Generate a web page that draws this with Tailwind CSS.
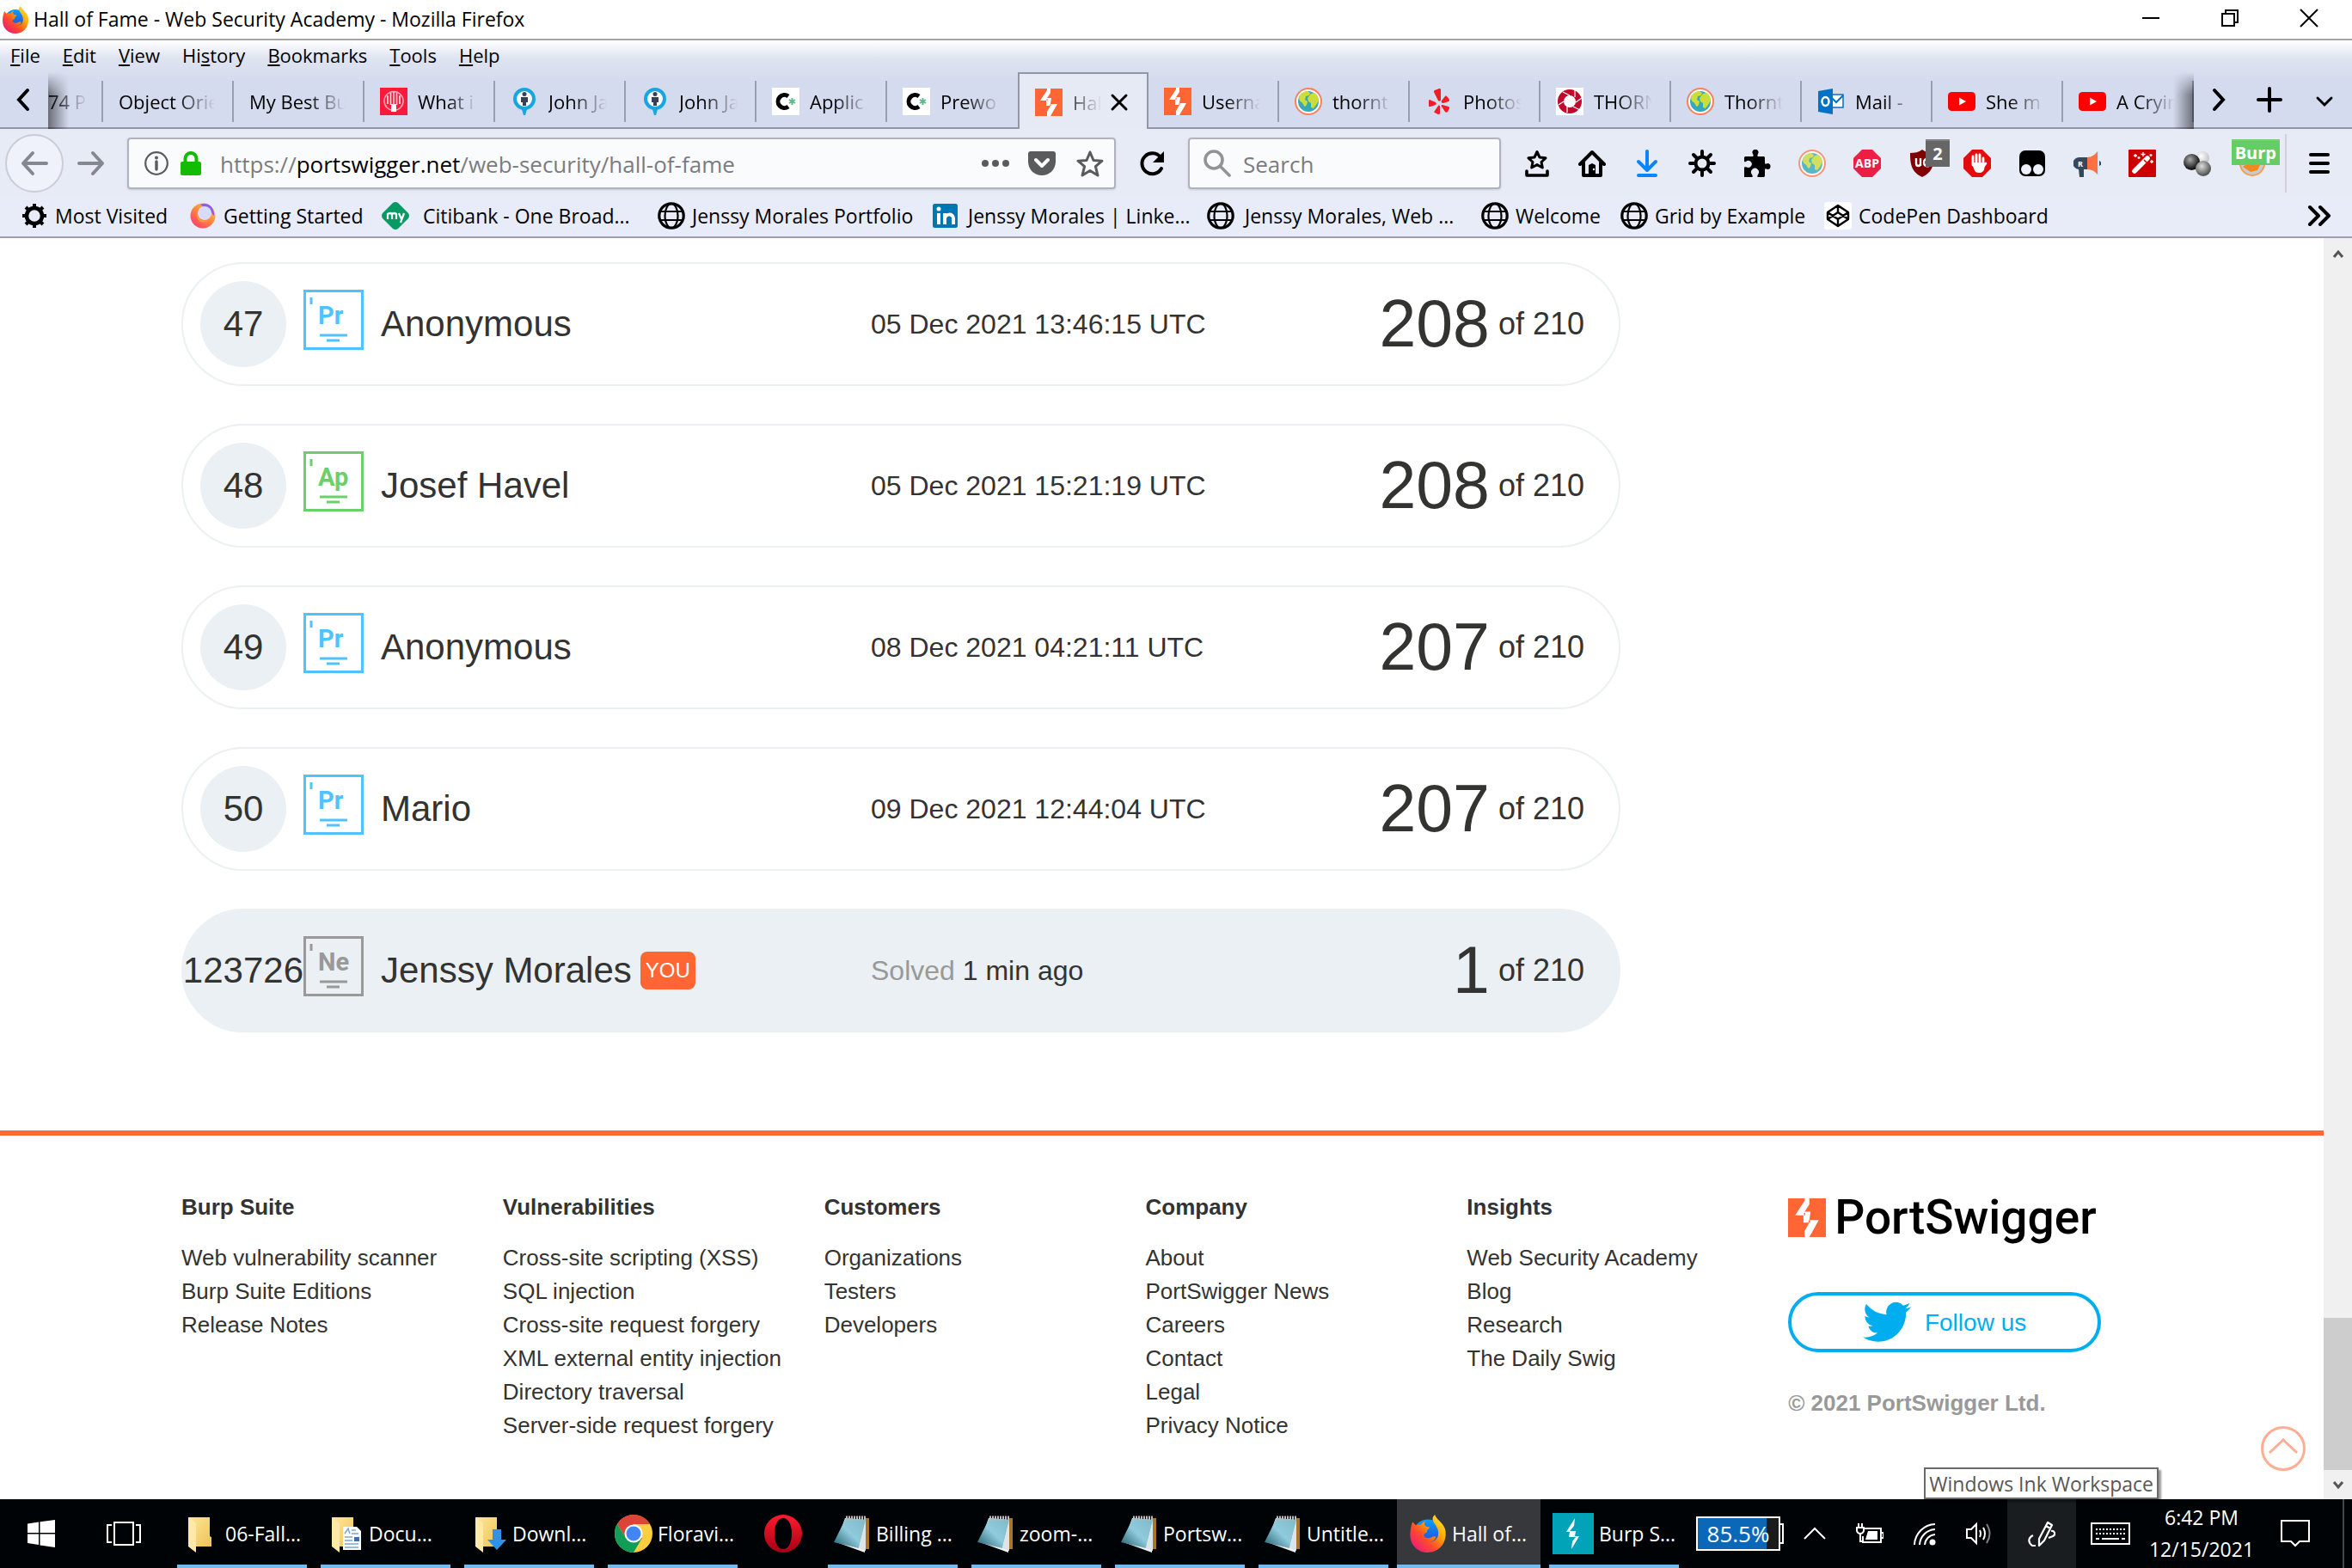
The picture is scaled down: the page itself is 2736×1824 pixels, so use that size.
<!DOCTYPE html>
<html lang="en">
<head>
<meta charset="utf-8">
<title>Hall of Fame - Web Security Academy</title>
<script src="https://cdn.jsdelivr.net/npm/@tailwindcss/browser@4"></script>
</head>
<body class="flex h-screen flex-col overflow-hidden bg-white font-['Open_Sans','Noto_Sans',sans-serif] text-[23px] leading-8 text-black">

<!-- Shared icon sprite -->
<svg class="absolute size-0" aria-hidden="true">
  <defs>
    <linearGradient id="ffBody" x1="1" y1="0" x2="0.1" y2="1"><stop offset="0" stop-color="#fff04a"/><stop offset=".35" stop-color="#ffb000"/><stop offset=".65" stop-color="#ff4a2d"/><stop offset="1" stop-color="#e8108a"/></linearGradient>
    <linearGradient id="ffGlobe" x1="0" y1="0" x2="0" y2="1"><stop offset="0" stop-color="#0a9dff"/><stop offset="1" stop-color="#3035c4"/></linearGradient>
    <linearGradient id="gsG" x1="1" y1="0" x2="0.2" y2="1"><stop offset="0" stop-color="#ffd84d"/><stop offset=".5" stop-color="#ff8a3c"/><stop offset="1" stop-color="#ff3b6b"/></linearGradient>
    <linearGradient id="foldG" x1="0" y1="0" x2="1" y2="1"><stop offset="0" stop-color="#ffe79c"/><stop offset="1" stop-color="#eec254"/></linearGradient>
    <linearGradient id="noteG" x1="0" y1="1" x2="1" y2="0"><stop offset="0" stop-color="#1d5a68"/><stop offset=".5" stop-color="#8fcbdc"/><stop offset="1" stop-color="#7fb9ca"/></linearGradient>
    <linearGradient id="operaG" x1="0" y1="0" x2="0" y2="1"><stop offset="0" stop-color="#ff1b2d"/><stop offset="1" stop-color="#a70014"/></linearGradient>
    <radialGradient id="ballK" cx=".4" cy=".35" r=".6"><stop offset="0" stop-color="#aaa"/><stop offset="1" stop-color="#111"/></radialGradient>
    <radialGradient id="ballG" cx=".4" cy=".35" r=".6"><stop offset="0" stop-color="#ddd"/><stop offset="1" stop-color="#555"/></radialGradient>
    <radialGradient id="ballW" cx=".4" cy=".35" r=".7"><stop offset="0" stop-color="#fff"/><stop offset="1" stop-color="#bbb"/></radialGradient>
  </defs>
  <symbol id="firefox" viewBox="0 0 32 32">
    <circle cx="16" cy="17" r="13" fill="url(#ffGlobe)"/>
    <path d="M3 6c1 1 2 2.500 3 3 1-.6 3-.7 4-.5C11 7 12.500 6 14 5.500c-1.500 1.800-1 3.500.5 4.500 1 .4 2.500.3 2.800.8.2.8-1.300 1.700-2 2.200.2 1.400-.3 1.900-1.300 2.500-1.500.8-2 2-.8 3.300 1.500 1.500 4 1.200 5.800.2 2-1 3.500-.8 3.800.2-1 2.200-3.300 3.600-6 3.800 5 .5 8.700-3.500 8-8.500C24.200 9 20 7 20 3.500 20 2 21 .8 22 0c.8 3 3.500 4.500 5.800 7.500C30 10 31.500 13 31 18c-.8 8-7 14-15 14S1 26 1 17C1 13 2 9 3 6z" fill="url(#ffBody)"/>
  </symbol>
  <symbol id="bolt" viewBox="0 0 32 32">
    <rect width="32" height="32" fill="#ff6633"/>
    <path d="M14 0h4v5l-4 6h5l-1 7h8L18 32h-4v-5l4-7h-5v-6H6L14 2z" fill="#fff"/>
    <path d="M14 12v2M18 18v2" stroke="#ff6633" stroke-width="1"/>
  </symbol>
  <symbol id="earth" viewBox="0 0 32 32">
    <circle cx="16" cy="16" r="15" fill="#fff" stroke="#f98057" stroke-width="2"/>
    <circle cx="16" cy="16" r="12" fill="#36a9b8"/>
    <path d="M6 9c3-4 7-5 9-5l3 2-1 3-4 1-1 4 3 2-1 4-2 2c-2-1-2-4-4-5-2-1-4-4-2-8zM19 7l4-1c3 2 5 6 5 9l-3 5-3 4-3-1v-5l-3-2-1-4z" fill="#cddc39"/>
  </symbol>
  <symbol id="pin" viewBox="0 0 32 32">
    <ellipse cx="16" cy="13" rx="11" ry="11" fill="#fff" stroke="#19a6dc" stroke-width="4"/>
    <path d="M12 22h8l-3 10h-2z" fill="#19a6dc"/><circle cx="16" cy="7.500" r="2.500" fill="#3a3f55"/><path d="M12 11h8v6h-2v4h-4v-4h-2z" fill="#3a3f55"/>
  </symbol>
  <symbol id="cstar" viewBox="0 0 32 32">
    <rect width="32" height="32" fill="#fff"/><path d="M19 10a7.500 7.500 0 1 0 0 12" fill="none" stroke="#000" stroke-width="5"/><path d="M23.500 12v8M20 14l7 4M27 14l-7 4" stroke="#5cb88a" stroke-width="2"/>
  </symbol>
  <symbol id="youtube" viewBox="0 0 32 32"><rect y="5" width="32" height="22" rx="4.500" fill="#f00"/><path d="M13 11.500v9l8-4.500z" fill="#fff"/></symbol>
  <symbol id="net" viewBox="0 0 32 32">
    <g fill="none" stroke="#000"><circle cx="16" cy="16" r="14.200" stroke-width="3.200"/><ellipse cx="16" cy="16" rx="7.500" ry="14" stroke-width="2.200"/><path d="M4 11h24M4 21h24" stroke-width="2.200"/></g>
  </symbol>
  <symbol id="folder" viewBox="0 0 44 44"><path d="M7 3h25v22l2 1v11H12z" fill="url(#foldG)"/><path d="M7 3l9 7v34l-9-7z" fill="#ffe9a8"/></symbol>
  <symbol id="notepad" viewBox="0 0 44 44">
    <path d="M38 4h4v36h-5z" fill="#a8752a"/><path d="M14 4l24 2-1 38-33-12z" fill="#eef3f5"/><path d="M15 4l23 2-8 33L1 32z" fill="url(#noteG)"/><path d="M38 8v34l-8-3z" fill="#dde4e8"/><path d="M15 4h24" stroke="#bbb" stroke-width="5" stroke-dasharray="2 1"/>
  </symbol>
</svg>

<header>
  <!-- Title bar -->
  <div class="flex h-[47px] items-center border-b-2 border-[#a6a6a6] bg-white">
    <svg class="ml-0.5 size-8"><use href="#firefox"/></svg>
    <h1 class="ml-[5px] flex-1 pb-0.5">Hall of Fame - Web Security Academy - Mozilla Firefox</h1>
    <div class="mr-1 flex pb-1">
      <button aria-label="Minimize" class="flex w-[92px] justify-center"><svg class="size-6" viewBox="0 0 24 24"><path d="M2 12h20" stroke="#000" stroke-width="2"/></svg></button>
      <button aria-label="Restore" class="flex w-[92px] justify-center"><svg class="size-6" viewBox="0 0 24 24" fill="none" stroke="#000" stroke-width="2"><path d="M3 7h14v14H3zM7 7V3h14v14h-4"/></svg></button>
      <button aria-label="Close" class="flex w-[92px] justify-center"><svg class="size-6" viewBox="0 0 24 24"><path d="M2 2l20 20M22 2L2 22" stroke="#000" stroke-width="2"/></svg></button>
    </div>
  </div>

  <!-- Menu and tab strip share one gradient -->
  <div class="bg-linear-to-b from-white via-[#dfe4f1] via-20% to-[#d5dbee] to-45% text-[22px]">
    <nav aria-label="Menu" class="flex h-[37px] items-center gap-[26px] pb-1 pl-3">
      <button><u>F</u>ile</button><button><u>E</u>dit</button><button><u>V</u>iew</button><button>Hi<u>s</u>tory</button><button><u>B</u>ookmarks</button><button><u>T</u>ools</button><button><u>H</u>elp</button>
    </nav>
    <div class="flex h-[66px]">
      <button aria-label="Scroll tabs left" class="flex w-14 items-center justify-center border-b-2 border-[#9297a8]"><svg class="size-8" viewBox="0 0 32 32"><path d="M20 5L10 16l10 11" fill="none" stroke="#000" stroke-width="4" stroke-linecap="round"/></svg></button>
      <div class="relative flex flex-1 overflow-hidden">
        <div class="pointer-events-none absolute inset-y-0 left-0 z-10 w-6 bg-linear-to-r from-black/50 to-transparent [mask-image:linear-gradient(transparent,black_40%)]"></div>
        <div class="pointer-events-none absolute inset-y-0 right-0 z-10 w-6 bg-linear-to-l from-black/50 to-transparent [mask-image:linear-gradient(transparent,black_40%)]"></div>
        <a href="#" class="flex w-16 shrink-0 items-center border-b-2 border-[#9297a8] pt-1"><span class="flex-1 whitespace-nowrap [mask-image:linear-gradient(to_right,black,transparent_75%)]">74 P</span><i class="h-12 w-0.5 bg-[#9a9fae]"></i></a>
        <a href="#" class="flex w-[152px] shrink-0 items-center border-b-2 border-[#9297a8] pt-1 pl-[18px]"><span class="mr-5 flex-1 overflow-hidden whitespace-nowrap [mask-image:linear-gradient(to_right,black_60%,transparent)]">Object Orie</span><i class="h-12 w-0.5 bg-[#9a9fae]"></i></a>
        <a href="#" class="flex w-[152px] shrink-0 items-center border-b-2 border-[#9297a8] pt-1 pl-[18px]"><span class="mr-5 flex-1 overflow-hidden whitespace-nowrap [mask-image:linear-gradient(to_right,black_60%,transparent)]">My Best Bu</span><i class="h-12 w-0.5 bg-[#9a9fae]"></i></a>
        <a href="#" class="flex w-[152px] shrink-0 items-center border-b-2 border-[#9297a8] pt-1 pl-[18px]"><svg class="mr-3 size-8" viewBox="0 0 32 32"><rect width="32" height="32" fill="#fb1a3c"/><g stroke="#fff" fill="none" stroke-width="1.600"><path d="M16 5v22M12.500 6v14M19.500 6v14M9 9v10M23 9v10" stroke-opacity=".85"/><circle cx="16" cy="15.500" r="11" stroke-opacity=".6"/></g><path d="M13 19h6v9h-6z" fill="#fff"/></svg><span class="mr-5 flex-1 overflow-hidden whitespace-nowrap [mask-image:linear-gradient(to_right,black_50%,transparent)]">What i</span><i class="h-12 w-0.5 bg-[#9a9fae]"></i></a>
        <a href="#" class="flex w-[152px] shrink-0 items-center border-b-2 border-[#9297a8] pt-1 pl-[18px]"><svg class="mr-3 size-8"><use href="#pin"/></svg><span class="mr-5 flex-1 overflow-hidden whitespace-nowrap [mask-image:linear-gradient(to_right,black_40%,transparent)]">John Ja</span><i class="h-12 w-0.5 bg-[#9a9fae]"></i></a>
        <a href="#" class="flex w-[152px] shrink-0 items-center border-b-2 border-[#9297a8] pt-1 pl-[18px]"><svg class="mr-3 size-8"><use href="#pin"/></svg><span class="mr-5 flex-1 overflow-hidden whitespace-nowrap [mask-image:linear-gradient(to_right,black_40%,transparent)]">John Ja</span><i class="h-12 w-0.5 bg-[#9a9fae]"></i></a>
        <a href="#" class="flex w-[152px] shrink-0 items-center border-b-2 border-[#9297a8] pt-1 pl-[18px]"><svg class="mr-3 size-8"><use href="#cstar"/></svg><span class="mr-5 flex-1 overflow-hidden whitespace-nowrap [mask-image:linear-gradient(to_right,black_40%,transparent)]">Applic</span><i class="h-12 w-0.5 bg-[#9a9fae]"></i></a>
        <a href="#" class="flex w-[152px] shrink-0 items-center border-b-2 border-[#9297a8] pt-1 pl-[18px]"><svg class="mr-3 size-8"><use href="#cstar"/></svg><span class="mr-5 flex-1 overflow-hidden whitespace-nowrap [mask-image:linear-gradient(to_right,black_40%,transparent)]">Prewo</span></a>
        <a href="#" aria-current="page" class="flex w-[152px] shrink-0 items-center border-x-2 border-t-2 border-[#9297a8] bg-[#e6eaf5] pt-0.5 pl-[18px]"><svg class="mr-3 size-8"><use href="#bolt"/></svg><span class="w-[34px] whitespace-nowrap opacity-70 [mask-image:linear-gradient(to_right,black,transparent)]">Hal</span><svg class="ml-2 size-6" viewBox="0 0 24 24"><path d="M4 4l16 16M20 4L4 20" stroke="#000" stroke-width="3" stroke-linecap="round"/></svg></a>
        <a href="#" class="flex w-[152px] shrink-0 items-center border-b-2 border-[#9297a8] pt-1 pl-[18px]"><svg class="mr-3 size-8"><use href="#bolt"/></svg><span class="mr-5 flex-1 overflow-hidden whitespace-nowrap [mask-image:linear-gradient(to_right,black_40%,transparent)]">Userna</span><i class="h-12 w-0.5 bg-[#9a9fae]"></i></a>
        <a href="#" class="flex w-[152px] shrink-0 items-center border-b-2 border-[#9297a8] pt-1 pl-[18px]"><svg class="mr-3 size-8"><use href="#earth"/></svg><span class="mr-5 flex-1 overflow-hidden whitespace-nowrap [mask-image:linear-gradient(to_right,black_40%,transparent)]">thornt</span><i class="h-12 w-0.5 bg-[#9a9fae]"></i></a>
        <a href="#" class="flex w-[152px] shrink-0 items-center border-b-2 border-[#9297a8] pt-1 pl-[18px]"><svg class="mr-3 size-8" viewBox="0 0 32 32" fill="#f21d24"><path d="M11 3l5-2c1 0 2 0 2 1v12c0 2-2 2-3 1L10 5c0-1 0-2 1-2zM5 14l7 3c1 1 1 2 0 3l-6 2c-2 0-2 0-2-2v-4c0-1 0-2 1-2zM19 15l4-5c1-1 2 0 3 1l2 3c0 1 0 2-1 2l-6 2c-2 0-3-1-2-3zM20 20l7 2c1 0 1 1 1 2l-2 4c-1 1-2 1-3 0l-4-6c-1-2 0-2 1-2zM15 21c1-1 2 0 2 1v7c0 2-1 2-2 2l-4-2c-1 0-1-1 0-2z"/></svg><span class="mr-5 flex-1 overflow-hidden whitespace-nowrap [mask-image:linear-gradient(to_right,black_40%,transparent)]">Photos</span><i class="h-12 w-0.5 bg-[#9a9fae]"></i></a>
        <a href="#" class="flex w-[152px] shrink-0 items-center border-b-2 border-[#9297a8] pt-1 pl-[18px]"><svg class="mr-3 size-8" viewBox="0 0 32 32"><rect width="32" height="32" fill="#fff"/><circle cx="16" cy="16" r="10.500" fill="none" stroke="#c0092c" stroke-width="7"/><path d="M16 9l-8-4M22 11V3M23 17l7-5M20 22l8 4M13 22v7M9 16l-6 4" stroke="#fff" stroke-width="1.200"/></svg><span class="mr-5 flex-1 overflow-hidden whitespace-nowrap [mask-image:linear-gradient(to_right,black_40%,transparent)]">THORN</span><i class="h-12 w-0.5 bg-[#9a9fae]"></i></a>
        <a href="#" class="flex w-[152px] shrink-0 items-center border-b-2 border-[#9297a8] pt-1 pl-[18px]"><svg class="mr-3 size-8"><use href="#earth"/></svg><span class="mr-5 flex-1 overflow-hidden whitespace-nowrap [mask-image:linear-gradient(to_right,black_40%,transparent)]">Thornt</span><i class="h-12 w-0.5 bg-[#9a9fae]"></i></a>
        <a href="#" class="flex w-[152px] shrink-0 items-center border-b-2 border-[#9297a8] pt-1 pl-[18px]"><svg class="mr-3 size-8" viewBox="0 0 32 32"><path d="M17 8h13v15H17z" fill="#fff" stroke="#0072c6" stroke-width="1.500"/><path d="M17 12l5 5 8-8" fill="none" stroke="#0072c6" stroke-width="2"/><path d="M1 4l17-3v30L1 28z" fill="#0072c6"/><ellipse cx="9.500" cy="16" rx="4" ry="5" fill="none" stroke="#fff" stroke-width="2.500"/></svg><span class="mr-5 flex-1 overflow-hidden whitespace-nowrap [mask-image:linear-gradient(to_right,black_50%,transparent)]">Mail -</span><i class="h-12 w-0.5 bg-[#9a9fae]"></i></a>
        <a href="#" class="flex w-[152px] shrink-0 items-center border-b-2 border-[#9297a8] pt-1 pl-[18px]"><svg class="mr-3 size-8"><use href="#youtube"/></svg><span class="mr-5 flex-1 overflow-hidden whitespace-nowrap [mask-image:linear-gradient(to_right,black_40%,transparent)]">She m</span><i class="h-12 w-0.5 bg-[#9a9fae]"></i></a>
        <a href="#" class="flex w-[152px] shrink-0 items-center border-b-2 border-[#9297a8] pt-1 pl-[18px]"><svg class="mr-3 size-8"><use href="#youtube"/></svg><span class="mr-5 flex-1 overflow-hidden whitespace-nowrap [mask-image:linear-gradient(to_right,black_40%,transparent)]">A Cryin</span><i class="h-12 w-0.5 bg-[#9a9fae]"></i></a>
      </div>
      <div class="flex w-[184px] border-b-2 border-[#9297a8]">
        <button aria-label="Scroll tabs right" class="flex w-14 items-center justify-center"><svg class="size-8" viewBox="0 0 32 32"><path d="M12 5l10 11-10 11" fill="none" stroke="#000" stroke-width="4" stroke-linecap="round"/></svg></button>
        <button aria-label="New tab" class="flex w-16 items-center justify-center"><svg class="size-8" viewBox="0 0 32 32"><path d="M16 3v26M3 16h26" stroke="#000" stroke-width="4" stroke-linecap="round"/></svg></button>
        <button aria-label="List all tabs" class="flex w-16 items-center justify-center pt-1"><svg class="size-8" viewBox="0 0 32 32"><path d="M8 12l8 8 8-8" fill="none" stroke="#000" stroke-width="3" stroke-linecap="round"/></svg></button>
      </div>
    </div>
  </div>

  <!-- Navigation toolbar -->
  <div class="flex h-20 items-center bg-[#e7ebf6]">
    <button aria-label="Back" class="ml-1.5 flex size-[68px] items-center justify-center rounded-full border-2 border-[#c9cdd8] bg-[#eff2fa]"><svg class="size-8" viewBox="0 0 32 32" fill="none" stroke="#86888f" stroke-width="4" stroke-linecap="round" stroke-linejoin="round"><path d="M30 16H3M14 4L3 16l11 12"/></svg></button>
    <button aria-label="Forward" class="ml-4"><svg class="size-8" viewBox="0 0 32 32" fill="none" stroke="#86888f" stroke-width="4" stroke-linecap="round" stroke-linejoin="round"><path d="M2 16h27M18 4l11 12-11 12"/></svg></button>
    <div class="ml-[26px] flex h-[60px] flex-1 items-center rounded-sm border-2 border-[#b0b3bd] bg-[#fafbfd] pr-3 pl-[18px] shadow-sm">
      <svg class="size-7" viewBox="0 0 28 28"><circle cx="14" cy="14" r="12.800" fill="none" stroke="#5b5b5b" stroke-width="2.200"/><path d="M14 12v9" stroke="#5b5b5b" stroke-width="3.400" stroke-linecap="round"/><circle cx="14" cy="7.500" r="2" fill="#5b5b5b"/></svg>
      <svg class="ml-3 size-7" viewBox="0 0 28 28"><path d="M7.500 14V8.500a6.500 6.500 0 0 1 13 0V14" fill="none" stroke="#12bc00" stroke-width="4"/><rect x="2" y="12" width="24" height="16" rx="2" fill="#12bc00"/></svg>
      <p class="ml-5 flex-1 pt-0.5 text-[26px] text-[#7c7c7e]">https://<span class="text-black">portswigger.net</span>/web-security/hall-of-fame</p>
      <button aria-label="Page actions"><svg class="h-8 w-9" viewBox="0 0 36 32" fill="#5b5b5d"><circle cx="6" cy="16" r="4"/><circle cx="18" cy="16" r="4"/><circle cx="30" cy="16" r="4"/></svg></button>
      <button aria-label="Save to Pocket" class="ml-5"><svg class="size-8" viewBox="0 0 32 32"><path d="M3 2h26c2 0 3 1 3 3v9c0 9-7 16-16 16S0 23 0 14V5c0-2 1-3 3-3z" fill="#5b5b5d"/><path d="M9 12l7 7 7-7" fill="none" stroke="#fff" stroke-width="4" stroke-linecap="round" stroke-linejoin="round"/></svg></button>
      <button aria-label="Bookmark page" class="ml-6"><svg class="size-8" viewBox="0 0 32 32"><path d="M16 3l4 9.500 10 .7-7.600 6.500L25 30l-9-5.500L7 30l2.600-10.300L2 13.200l10-.7z" fill="none" stroke="#5b5b5d" stroke-width="3" stroke-linejoin="round"/></svg></button>
    </div>
    <button aria-label="Reload" class="flex w-[84px] justify-center"><svg class="size-8" viewBox="0 0 32 32"><path d="M27 22a12 12 0 1 1-1-13" fill="none" stroke="#000" stroke-width="4" stroke-linecap="round"/><path d="M30 2v13H17z" fill="#000"/></svg></button>
    <label class="flex h-[60px] w-[364px] items-center rounded-sm border-2 border-[#b0b3bd] bg-[#fafbfd] pl-4 shadow-sm">
      <svg class="size-8 shrink-0" viewBox="0 0 32 32" fill="none" stroke="#939395" stroke-width="3.600" stroke-linecap="round"><circle cx="12" cy="12" r="10"/><path d="M20 20l10 10"/></svg>
      <input type="search" aria-label="Search" placeholder="Search" class="ml-[14px] w-full bg-transparent pt-0.5 text-[26px] outline-none placeholder:text-[#7c7c7e]">
    </label>
    <div class="ml-2.5 flex">
      <button aria-label="Library" class="flex w-16 justify-center"><svg class="size-8" viewBox="0 0 32 32" fill="none" stroke="#000" stroke-linejoin="round" stroke-linecap="round"><path d="M16 2.500l3 6.500 7 .8-5 4.700 1.300 6.500-6.300-3.400L9.700 21l1.300-6.500-5-4.700 7-.8z" stroke-width="3"/><path d="M4 25v5h24v-5" stroke-width="3.600"/></svg></button>
      <button aria-label="Home" class="flex w-16 justify-center"><svg class="size-8" viewBox="0 0 32 32"><path d="M2 17L16 3l14 14M6 15v15h20V15" fill="none" stroke="#000" stroke-width="4" stroke-linecap="round" stroke-linejoin="round"/><path d="M12 30V18l4-2 4 2v12z" fill="#000"/><circle cx="18" cy="23" r="1.200" fill="#fff"/></svg></button>
      <button aria-label="Downloads" class="flex w-16 justify-center"><svg class="size-8" viewBox="0 0 32 32" fill="none" stroke="#0a84ff" stroke-width="4" stroke-linecap="round" stroke-linejoin="round"><path d="M16 2v22M6 14l10 10 10-10M6 30h20"/></svg></button>
      <button aria-label="Settings" class="flex w-16 justify-center"><svg class="size-8" viewBox="0 0 32 32" fill="none" stroke="#000" stroke-width="4" stroke-linecap="round"><circle cx="16" cy="16" r="7.500"/><path d="M16 2v5M16 25v5M2 16h5M25 16h5M6 6l4 4M22 22l4 4M26 6l-4 4M10 22l-4 4"/></svg></button>
      <button aria-label="Add-ons" class="flex w-16 justify-center"><svg class="size-8" viewBox="0 0 32 32"><path d="M10 8c2 0 2-1 1-3a3.500 3.500 0 1 1 6 0c-1 2-1 3 1 3h5c1.500 0 2 .5 2 2v5c0 2 1 2 3 1a3.500 3.500 0 1 1 0 7c-2-1-3-1-3 1v6c0 1.500-.5 2-2 2h-6c-1 0-1-1 0-3a4.500 4.500 0 1 0-7 0c1 2 1 3 0 3H1V21c0-1 1-1 3-.5a4 4 0 1 0-1-6.500c-1 .6-2 .5-2-1v-3c0-1.500.5-2 2-2z" fill="#000"/></svg></button>
      <button aria-label="Proxy" class="flex w-16 justify-center"><svg class="size-8 opacity-80"><use href="#earth"/></svg></button>
      <button aria-label="Adblock Plus" class="flex w-16 justify-center"><svg class="size-8" viewBox="0 0 32 32"><path d="M10 0h12l10 10v12L22 32H10L0 22V10z" fill="#ed1e45"/><text x="16" y="21" text-anchor="middle" font-size="14" font-weight="700" fill="#fff" font-family="Open Sans">ABP</text></svg></button>
      <button aria-label="uBlock" class="relative flex w-16 justify-center"><svg class="size-8" viewBox="0 0 32 32"><path d="M16 0c4 3 9 4 14 4 0 14-2 22-14 28C4 26 2 18 2 4c5 0 10-1 14-4z" fill="#800000"/><path d="M9 10v6c0 4 5 4 5 0v-6m0 6v3M24 11c-4-1-6 1-6 4s2 5 6 4" fill="none" stroke="#fff" stroke-width="2.400"/></svg><span class="absolute -top-3 right-0 flex h-8 w-7 items-center justify-center border-t-2 border-[#808080] bg-[#666] text-xl font-bold text-white">2</span></button>
      <button aria-label="Blocker" class="flex w-16 justify-center"><svg class="size-8" viewBox="0 0 32 32"><path d="M10 0h12l10 10v12L22 32H10L0 22V10z" fill="#e40d0d"/><path d="M11 8v10M15 6v12M19 6v12M23 10v10l3-4" stroke="#fff" stroke-width="2.800" stroke-linecap="round" fill="none"/><path d="M9.600 15h14.800v6c0 4-3 6-6 6s-5-1-6-4z" fill="#fff"/></svg></button>
      <button aria-label="Tampermonkey" class="flex w-16 justify-center"><svg class="size-8" viewBox="0 0 32 32"><rect x="1" y="1" width="30" height="30" rx="7" fill="#000"/><circle cx="9" cy="23" r="6" fill="#eef1fa"/><circle cx="23" cy="23" r="6" fill="#eef1fa"/></svg></button>
      <button aria-label="Announcements" class="flex w-16 justify-center"><svg class="size-8" viewBox="0 0 32 32"><path d="M7 9h9v14h-4v9H7l-1-9a7 7 0 0 1 1-14z" fill="#34495e"/><path d="M16 9c5 0 9-3 12-7v27c-3-4-7-6-12-6z" fill="#ff7043"/><path d="M29 2v28" stroke="#cfe8f5" stroke-width="2"/><path d="M30 13c3 1 3 5 0 6z" fill="#34495e"/><text x="8" y="20" text-anchor="middle" font-size="9" font-weight="700" fill="#fff" font-family="Open Sans">R</text></svg></button>
      <button aria-label="Magic wand" class="flex w-16 justify-center"><svg class="size-8" viewBox="0 0 32 32"><rect width="32" height="32" rx="1" fill="#c00"/><path d="M7 25L22 10" stroke="#fff" stroke-width="5.500" stroke-linecap="round"/><path d="M18 12l3 3" stroke="#c00" stroke-width="1.500"/><path d="M17 3v5M14.500 5.500h5M8 5v4M6 7h4M27 12v4M25 14h4M12 8v3M10.500 9.500h3M26 5v3M24.500 6.500h3" stroke="#fff" stroke-width="1.300"/></svg></button>
      <button aria-label="Spheres" class="flex w-16 justify-center"><svg class="size-8" viewBox="0 0 32 32"><circle cx="22" cy="10" r="8" fill="url(#ballW)"/><circle cx="9.500" cy="14.500" r="9.500" fill="url(#ballK)"/><circle cx="23" cy="22" r="9" fill="url(#ballG)"/></svg></button>
      <button aria-label="Burp proxy" class="relative flex w-16 justify-center"><svg class="size-8" viewBox="0 0 32 32"><circle cx="16" cy="16" r="14" fill="#c8cbd2" stroke="#f0a050" stroke-width="2"/><path d="M5 20l8-6h14l-5 10-8 2z" fill="#ef8a1d"/></svg><span class="absolute -top-3 right-0 flex h-[30px] items-center border-t-2 border-[#78cc78] bg-[#66cc66] px-1 text-xl font-bold text-white">Burp</span></button>
    </div>
    <i class="ml-1.5 h-[68px] w-0.5 bg-[#cfd2dd]"></i>
    <button aria-label="Open menu" class="flex w-[76px] justify-center"><svg class="size-8" viewBox="0 0 32 32"><path d="M6 6h20M6 16h20M6 26h20" stroke="#000" stroke-width="4" stroke-linecap="round"/></svg></button>
  </div>

  <!-- Bookmarks toolbar -->
  <nav aria-label="Bookmarks" class="flex h-[47px] items-center border-b-2 border-[#9b9fb0] bg-[#e8ecf8] pb-1 pl-6 whitespace-nowrap">
    <a href="#" class="flex w-[196px] items-center gap-2"><svg class="size-8" viewBox="0 0 32 32" fill="none" stroke="#000"><circle cx="16" cy="16" r="9" stroke-width="4.500"/><path d="M16 2v5M16 25v5M2 16h5M25 16h5M6 6l4 4M22 22l4 4M26 6l-4 4M10 22l-4 4" stroke-width="4"/></svg>Most Visited</a>
    <a href="#" class="flex w-[224px] items-center gap-2"><svg class="size-8" viewBox="0 0 32 32"><circle cx="16" cy="16" r="14.500" fill="url(#gsG)"/><path d="M13 3c8-4 17 3 16 13-1-1-2-2-3-4" fill="#9059ff"/><circle cx="18" cy="13" r="8" fill="#d9dcf8"/><path d="M9 12c1 8 7 11 14 9-5 5-16 3-14-9z" fill="#ff9a3c"/></svg>Getting Started</a>
    <a href="#" class="flex w-[321px] items-center gap-4"><svg class="size-8" viewBox="0 0 32 32"><path d="M13 1q3-2 6 0l12 12q2 3 0 6L19 31q-3 2-6 0L1 19q-2-3 0-6z" fill="#079a63"/><path d="M7 20v-6q3-2 5 0v6m0-6q3-2 5 0v6M20 13l3 7m3-7l-4 11" fill="none" stroke="#fff" stroke-width="2.200"/></svg>Citibank - One Broad...</a>
    <a href="#" class="flex w-[319px] items-center gap-2"><svg class="size-8"><use href="#net"/></svg>Jenssy Morales Portfolio</a>
    <a href="#" class="flex w-[320px] items-center gap-2.5"><svg class="size-8" viewBox="0 0 32 32"><rect x="1" y="2" width="29" height="28" rx="2.500" fill="#0077b5"/><path d="M8 13v13M15 26V13m0 7c0-7 10-7 10-1v7" fill="none" stroke="#fff" stroke-width="4"/><circle cx="8" cy="8" r="2.500" fill="#fff"/></svg>Jenssy Morales | Linke...</a>
    <a href="#" class="flex w-[319px] items-center gap-3"><svg class="size-8"><use href="#net"/></svg>Jenssy Morales, Web ...</a>
    <a href="#" class="flex w-[162px] items-center gap-2"><svg class="size-8"><use href="#net"/></svg>Welcome</a>
    <a href="#" class="flex w-[237px] items-center gap-2"><svg class="size-8"><use href="#net"/></svg>Grid by Example</a>
    <a href="#" class="flex flex-1 items-center gap-2"><svg class="size-8" viewBox="0 0 32 32"><rect width="32" height="32" rx="3" fill="#fff"/><g fill="none" stroke="#000" stroke-width="2.400" stroke-linejoin="round"><path d="M16 4l12 8v8l-12 8-12-8v-8zM16 4v8M16 20v8M4 12l12 8 12-8M4 20l12-8 12 8"/></g></svg>CodePen Dashboard</a>
    <button aria-label="More bookmarks" class="mr-[22px]"><svg class="size-8" viewBox="0 0 32 32" fill="none" stroke="#000" stroke-width="4" stroke-linecap="round" stroke-linejoin="round"><path d="M5 6l10 10L5 26M17 6l10 10-10 10"/></svg></button>
  </nav>
</header>

<!-- Web page viewport -->
<div class="flex min-h-0 flex-1 font-['Liberation_Sans',Arial,sans-serif] text-[#333332]">
  <div class="relative flex min-w-0 flex-1 flex-col overflow-hidden">
    <main class="px-[211px] pt-7 pb-[114px]">
      <ol class="flex max-w-[1674px] flex-col gap-11 text-[42px]">
        <li class="grid h-36 grid-cols-[140px_90px_570px_1fr] items-center rounded-full border-2 border-[#eaf0f3] pr-10">
          <span class="flex size-[100px] items-center justify-center justify-self-center rounded-full bg-[#eaf0f3]">47</span>
          <svg class="mb-2.5 size-[70px] text-[#4fc3ff]" viewBox="0 0 70 70"><rect x="1.500" y="1.500" width="67" height="67" fill="none" stroke="currentColor" stroke-width="3"/><path d="M9 9v8M19 53h32M27 59h15" stroke="currentColor" stroke-width="3"/><text x="17" y="40" font-size="29" font-weight="700" fill="currentColor" font-family="Liberation Sans Narrow, Roboto">Pr</text></svg>
          <span>Anonymous</span>
          <span class="col-start-4 row-start-1 flex items-center justify-between"><time class="text-[32px]">05 Dec 2021 13:46:15 UTC</time><span class="flex items-center gap-2.5 text-4xl"><span class="text-[77px]">208</span>of 210</span></span>
        </li>
        <li class="grid h-36 grid-cols-[140px_90px_570px_1fr] items-center rounded-full border-2 border-[#eaf0f3] pr-10">
          <span class="flex size-[100px] items-center justify-center justify-self-center rounded-full bg-[#eaf0f3]">48</span>
          <svg class="mb-2.5 size-[70px] text-[#6bcf6b]" viewBox="0 0 70 70"><rect x="1.500" y="1.500" width="67" height="67" fill="none" stroke="currentColor" stroke-width="3"/><path d="M9 9v8M19 53h32M27 59h15" stroke="currentColor" stroke-width="3"/><text x="17" y="40" font-size="29" font-weight="700" fill="currentColor" font-family="Liberation Sans Narrow, Roboto">Ap</text></svg>
          <span>Josef Havel</span>
          <span class="col-start-4 row-start-1 flex items-center justify-between"><time class="text-[32px]">05 Dec 2021 15:21:19 UTC</time><span class="flex items-center gap-2.5 text-4xl"><span class="text-[77px]">208</span>of 210</span></span>
        </li>
        <li class="grid h-36 grid-cols-[140px_90px_570px_1fr] items-center rounded-full border-2 border-[#eaf0f3] pr-10">
          <span class="flex size-[100px] items-center justify-center justify-self-center rounded-full bg-[#eaf0f3]">49</span>
          <svg class="mb-2.5 size-[70px] text-[#4fc3ff]" viewBox="0 0 70 70"><rect x="1.500" y="1.500" width="67" height="67" fill="none" stroke="currentColor" stroke-width="3"/><path d="M9 9v8M19 53h32M27 59h15" stroke="currentColor" stroke-width="3"/><text x="17" y="40" font-size="29" font-weight="700" fill="currentColor" font-family="Liberation Sans Narrow, Roboto">Pr</text></svg>
          <span>Anonymous</span>
          <span class="col-start-4 row-start-1 flex items-center justify-between"><time class="text-[32px]">08 Dec 2021 04:21:11 UTC</time><span class="flex items-center gap-2.5 text-4xl"><span class="text-[77px]">207</span>of 210</span></span>
        </li>
        <li class="grid h-36 grid-cols-[140px_90px_570px_1fr] items-center rounded-full border-2 border-[#eaf0f3] pr-10">
          <span class="flex size-[100px] items-center justify-center justify-self-center rounded-full bg-[#eaf0f3]">50</span>
          <svg class="mb-2.5 size-[70px] text-[#4fc3ff]" viewBox="0 0 70 70"><rect x="1.500" y="1.500" width="67" height="67" fill="none" stroke="currentColor" stroke-width="3"/><path d="M9 9v8M19 53h32M27 59h15" stroke="currentColor" stroke-width="3"/><text x="17" y="40" font-size="29" font-weight="700" fill="currentColor" font-family="Liberation Sans Narrow, Roboto">Pr</text></svg>
          <span>Mario</span>
          <span class="col-start-4 row-start-1 flex items-center justify-between"><time class="text-[32px]">09 Dec 2021 12:44:04 UTC</time><span class="flex items-center gap-2.5 text-4xl"><span class="text-[77px]">207</span>of 210</span></span>
        </li>
        <li class="grid h-36 grid-cols-[140px_90px_570px_1fr] items-center rounded-full border-2 border-[#eaf0f3] bg-[#eaf0f3] pr-10">
          <span class="justify-self-end">123726</span>
          <svg class="mb-2.5 size-[70px] text-[#999998]" viewBox="0 0 70 70"><rect x="1.500" y="1.500" width="67" height="67" fill="none" stroke="currentColor" stroke-width="3"/><path d="M9 9v8M19 53h32M27 59h15" stroke="currentColor" stroke-width="3"/><text x="17" y="40" font-size="29" font-weight="700" fill="currentColor" font-family="Liberation Sans Narrow, Roboto">Ne</text></svg>
          <span class="flex items-center gap-2.5">Jenssy Morales <span class="flex h-11 items-center rounded-lg bg-[#ff6633] px-1.5 text-2xl text-white">YOU</span></span>
          <span class="col-start-4 row-start-1 flex items-center justify-between"><span class="text-[32px]"><span class="text-[#999998]">Solved</span> 1 min ago</span><span class="flex items-center gap-2.5 text-4xl"><span class="text-[77px]">1</span>of 210</span></span>
        </li>
      </ol>
    </main>

    <footer class="grid grid-cols-6 gap-2.5 border-t-6 border-[#ff6633] pt-16 pr-[259px] pl-[211px] text-[26px] leading-[39px] whitespace-nowrap">
      <section><h2 class="mb-5 font-bold">Burp Suite</h2><ul><li><a href="#">Web vulnerability scanner</a></li><li><a href="#">Burp Suite Editions</a></li><li><a href="#">Release Notes</a></li></ul></section>
      <section><h2 class="mb-5 font-bold">Vulnerabilities</h2><ul><li><a href="#">Cross-site scripting (XSS)</a></li><li><a href="#">SQL injection</a></li><li><a href="#">Cross-site request forgery</a></li><li><a href="#">XML external entity injection</a></li><li><a href="#">Directory traversal</a></li><li><a href="#">Server-side request forgery</a></li></ul></section>
      <section><h2 class="mb-5 font-bold">Customers</h2><ul><li><a href="#">Organizations</a></li><li><a href="#">Testers</a></li><li><a href="#">Developers</a></li></ul></section>
      <section><h2 class="mb-5 font-bold">Company</h2><ul><li><a href="#">About</a></li><li><a href="#">PortSwigger News</a></li><li><a href="#">Careers</a></li><li><a href="#">Contact</a></li><li><a href="#">Legal</a></li><li><a href="#">Privacy Notice</a></li></ul></section>
      <section><h2 class="mb-5 font-bold">Insights</h2><ul><li><a href="#">Web Security Academy</a></li><li><a href="#">Blog</a></li><li><a href="#">Research</a></li><li><a href="#">The Daily Swig</a></li></ul></section>
      <section>
        <a href="#" class="mt-1 flex h-[54px] items-center gap-2.5 font-['Roboto',sans-serif] text-[55px] font-medium text-black"><svg class="h-[45px] w-11" viewBox="0 0 32 32" preserveAspectRatio="none"><use href="#bolt"/></svg>PortSwigger</a>
        <a href="#" class="mt-15 flex h-[70px] items-center justify-center gap-4 rounded-full border-4 border-[#00aeef] text-[28px] text-[#00aeef]"><svg class="h-12 w-14" viewBox="0 0 24 20" fill="currentColor"><path d="M24 2.400a9.800 9.800 0 0 1-2.800.8A4.900 4.900 0 0 0 23.300.5a9.900 9.900 0 0 1-3.100 1.200 4.900 4.900 0 0 0-8.400 4.500A14 14 0 0 1 1.700 1a4.900 4.900 0 0 0 1.500 6.600A4.900 4.900 0 0 1 1 7v.1a4.900 4.900 0 0 0 3.900 4.800 5 5 0 0 1-2.200.1 4.900 4.900 0 0 0 4.600 3.400A9.900 9.900 0 0 1 0 17.500a14 14 0 0 0 7.500 2.200c9.100 0 14-7.500 14-14v-.6A10 10 0 0 0 24 2.400z"/></svg>Follow us</a>
        <p class="mt-10 font-bold text-[#999]">© 2021 PortSwigger Ltd.</p>
      </section>
    </footer>

    <a href="#" aria-label="Back to top" class="absolute right-[21px] bottom-[33px]"><svg class="size-[52px]" viewBox="0 0 52 52" fill="none" stroke="#ffae93" stroke-width="3"><circle cx="26" cy="26" r="24.500"/><path d="M10 31l16-15 16 15"/></svg></a>
  </div>
  <!-- Scrollbar -->
  <div class="flex w-[33px] flex-col items-center bg-[#f0f0f0]">
    <svg class="h-[34px] w-8" viewBox="0 0 32 34"><path d="M11 22l5-6 5 6" fill="none" stroke="#555" stroke-width="3"/></svg>
    <div class="flex-1"></div>
    <div class="h-[177px] w-full bg-[#cdcdcd]"></div>
    <svg class="h-[34px] w-8" viewBox="0 0 32 34"><path d="M11 14l5 6 5-6" fill="none" stroke="#555" stroke-width="3"/></svg>
  </div>
</div>

<!-- Taskbar -->
<footer class="relative flex h-20 items-stretch bg-[#000306] text-white">
  <div role="tooltip" class="absolute right-[225px] bottom-full flex h-[37px] items-center border-2 border-[#6a6a6a] bg-white px-1 whitespace-nowrap text-[#575757] shadow-[3px_3px_2px_#0006]">Windows Ink Workspace</div>
  <button aria-label="Start" class="flex w-24 items-center justify-center"><svg class="size-8" viewBox="0 0 32 32" fill="#fff"><path d="M0 4.500l13-2V15H0zM14.500 2.200L32 0v15H14.500zM0 16.500h13V29l-13-2zM14.500 16.500H32V32l-17.500-2.500z"/></svg></button>
  <button aria-label="Task View" class="mr-1.5 flex w-24 items-center justify-center"><svg class="h-7 w-10" viewBox="0 0 40 28" fill="none" stroke="#fff" stroke-width="2"><path d="M9 1h22v26H9zM6 4H1v20h5M34 4h5v20h-5"/></svg></button>
  <button class="mx-2 flex w-[151px] items-center gap-1.5 border-b-4 border-[#76b9ed] pt-1 pl-1.5"><svg class="size-11 shrink-0"><use href="#folder"/></svg>06-Fall...</button>
  <button class="mx-2 flex w-[151px] items-center gap-1.5 border-b-4 border-[#76b9ed] pt-1 pl-1.5"><svg class="size-11 shrink-0" viewBox="0 0 44 44"><use href="#folder"/><path d="M20 14h16l5 5v22H20z" fill="#fff"/><path d="M22 22l4-6 2 6M30 18h5M30 22h8M22 26h9M22 30h9M22 34h16M22 38h16" stroke="#7aa6d8" stroke-width="1.500" fill="none"/><path d="M33 26h6v5h-6z" fill="#3b6fb0"/></svg>Docu...</button>
  <button class="mx-2 flex w-[151px] items-center gap-1.5 border-b-4 border-[#76b9ed] pt-1 pl-1.5"><svg class="size-11 shrink-0" viewBox="0 0 44 44"><use href="#folder"/><path d="M27 17h10v12h6L32 41 21 29h6z" fill="#2f92e6"/></svg>Downl...</button>
  <button class="mx-2 flex w-[151px] items-center gap-1.5 border-b-4 border-[#76b9ed] pt-1 pl-2"><svg class="size-11 shrink-0" viewBox="0 0 44 44"><circle cx="22" cy="22" r="22" fill="#ffcd40"/><path d="M3 11a22 22 0 0 1 38 0H22l-9 16z" fill="#db4437"/><path d="M3 11a22 22 0 0 0 19 33l10-17H13z" fill="#0f9d58"/><circle cx="22" cy="22" r="10.500" fill="#fff"/><circle cx="22" cy="22" r="8.500" fill="#4285f4"/></svg>Floravi...</button>
  <button aria-label="Opera" class="flex w-[89px] items-center justify-center"><svg class="size-11" viewBox="0 0 44 44"><path fill-rule="evenodd" d="M22 0a22 22 0 1 0 0 44 22 22 0 0 0 0-44zm0 4c6 0 10 7 10 18s-4 18-10 18-10-7-10-18S16 4 22 4z" fill="url(#operaG)"/></svg></button>
  <button class="mx-2 flex w-[151px] items-center gap-1.5 border-b-4 border-[#76b9ed] pt-1 pl-1.5"><svg class="size-11 shrink-0"><use href="#notepad"/></svg>Billing ...</button>
  <button class="mx-2 flex w-[151px] items-center gap-1.5 border-b-4 border-[#76b9ed] pt-1 pl-1.5"><svg class="size-11 shrink-0"><use href="#notepad"/></svg>zoom-...</button>
  <button class="mx-2 flex w-[151px] items-center gap-1.5 border-b-4 border-[#76b9ed] pt-1 pl-1.5"><svg class="size-11 shrink-0"><use href="#notepad"/></svg>Portsw...</button>
  <button class="mx-2 flex w-[151px] items-center gap-1.5 border-b-4 border-[#76b9ed] pt-1 pl-1.5"><svg class="size-11 shrink-0"><use href="#notepad"/></svg>Untitle...</button>
  <button class="mx-0.5 flex w-[167px] items-center gap-1.5 border-b-4 border-[#76b9ed] bg-[#36383b] pt-1 pl-3.5"><svg class="size-11 shrink-0"><use href="#firefox"/></svg>Hall of...</button>
  <button class="mx-2 flex w-[151px] items-center gap-1.5 border-b-4 border-[#76b9ed] pt-1 pl-1"><svg class="size-12 shrink-0" viewBox="0 0 48 48"><rect width="48" height="48" fill="#00a3b8"/><path d="M26 6l-1 9-5 6h7l-1 6h5L22 42l1-9 4-5h-8l1-6h-4z" fill="#fff"/></svg>Burp S...</button>
  <div class="ml-auto flex items-center">
    <div class="flex h-10 w-[98px] items-center justify-center border-2 border-white bg-linear-to-r from-[#0b68b8] from-85% to-[#1b1b1b] to-85% text-[26px]">85.5%</div>
    <svg class="mr-1 h-6 w-1" viewBox="0 0 4 24"><path d="M0 1h3v22H0" fill="none" stroke="#fff" stroke-width="2"/></svg>
    <button aria-label="Show hidden icons" class="flex w-16 justify-center"><svg class="h-4 w-7" viewBox="0 0 28 16"><path d="M2 14L14 2l12 12" fill="none" stroke="#fff" stroke-width="2"/></svg></button>
    <button aria-label="Power" class="flex w-16 justify-center"><svg class="h-6 w-8" viewBox="0 0 32 24" fill="none" stroke="#fff" stroke-width="2"><path d="M10 6h19v16H8v-7M30 11h2v6h-2M3 0v5M7 0v5M1 5h8v4q-1 3-4 3t-4-3zM5 12v9h3"/><path d="M14 9h11v10H11z" fill="#fff" stroke="none"/></svg></button>
    <button aria-label="Wi-Fi" class="flex w-16 justify-center"><svg class="size-7" viewBox="0 0 28 28" fill="none" stroke="#fff" stroke-width="2"><path d="M2 27A25 25 0 0 1 26 3M8 27A19 19 0 0 1 26 9M14 27A13 13 0 0 1 26 15"/><circle cx="23" cy="24" r="3.500" fill="#fff" stroke="none"/></svg></button>
    <button aria-label="Volume" class="flex w-16 justify-center"><svg class="size-8" viewBox="0 0 32 32" fill="none" stroke="#fff" stroke-width="2"><path d="M1 11h5l6-6v22l-6-6H1zM16 12q2 4 0 8M20 9q4 7 0 14"/><path d="M24 5q7 11 0 22" stroke-opacity=".5"/></svg></button>
    <button aria-label="Windows Ink Workspace" class="flex h-20 w-20 items-center justify-center bg-[#1a1d1f]"><svg class="size-8" viewBox="0 0 32 32" fill="none" stroke="#fff" stroke-width="2.200" stroke-linejoin="round"><path d="M23 3l5 3-9 18-6 6 0-8zM21 7l5 3M6 18c-6 3-6 8-1 12h4M27 13c4-1 6 4 2 6l-5 2"/></svg></button>
    <button aria-label="Touch keyboard" class="flex w-20 justify-center"><svg class="h-7 w-12" viewBox="0 0 48 28" fill="none" stroke="#fff" stroke-width="2"><path d="M2 2h44v24H2z"/><path d="M7 9h34M7 14h34" stroke-dasharray="2 2"/><path d="M7 20h4M14 20h20M37 20h4"/></svg></button>
    <time class="w-[132px] text-center leading-[37px]">6:42 PM<br>12/15/2021</time>
    <button aria-label="Notifications" class="flex w-[86px] justify-center"><svg class="h-8 w-9" viewBox="0 0 36 32" fill="none" stroke="#fff" stroke-width="2"><path d="M2 1h32v24H23l-5 5-5-5H2z"/></svg></button>
    <i class="mr-[9px] ml-3 h-20 w-0.5 bg-[#44474a]"></i>
  </div>
</footer>
</body>
</html>
